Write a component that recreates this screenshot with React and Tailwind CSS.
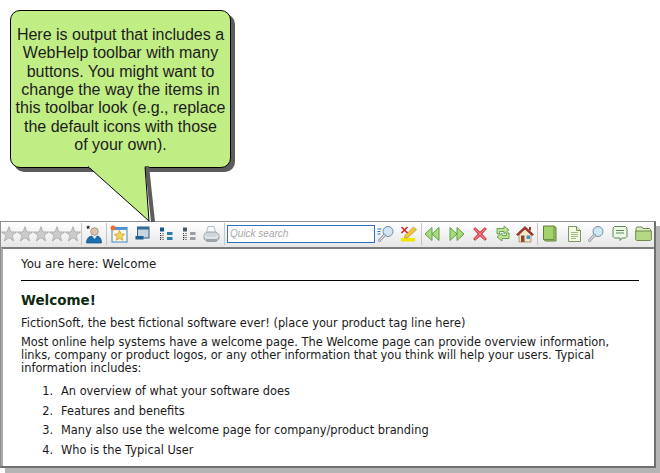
const Star = () => (
  <svg width="16" height="16" viewBox="0 0 16 16" className="shrink-0">
    <path d="M8 .5L9.900 5.900 15.600 6 11 9.500 12.700 15 8 11.700 3.300 15 5 9.500 .4 6 6.100 5.900z" fill="#cbcbcb" stroke="#a2a2a2" strokeWidth=".7" />
  </svg>
);

const Sep = ({ className }) => <div className={`w-px h-[22px] bg-[#c6c6c6] shrink-0 ${className}`} />;

const Person = () => (
  <svg width="17" height="20" viewBox="0 0 17 20" className="ml-[3px] shrink-0">
    <path d="M3 1l.6 1.500 1.500-.2-1 1.200.8 1.400-1.600-.6-1.200 1 .2-1.600-1.300-.9 1.600-.3z" fill="#111" />
    <circle cx="9.500" cy="7.500" r="3.800" fill="#dcc4b0" stroke="#94807a" strokeWidth=".7" />
    <path d="M1.500 19c0-4 2-6.500 5-7l3 2 3-2c2.500.5 4 3 4 7z" fill="#1f6fae" stroke="#0e4d82" strokeWidth=".7" />
    <path d="M7.500 12.500h4l-2 2.500z" fill="#e8eef2" />
  </svg>
);

const Favorites = () => (
  <svg width="18" height="18" viewBox="0 0 18 18" className="ml-[3px] shrink-0">
    <rect x="2" y="2.500" width="15" height="14.500" fill="#fbf7e8" stroke="#3f86c6" />
    <rect x="2" y="2.500" width="15" height="2.500" fill="#4a9bd8" />
    <path d="M9.500 5.500l1.600 3.400 3.600.4-2.700 2.400.8 3.600-3.300-1.900-3.300 1.900.8-3.600-2.700-2.400 3.600-.4z" fill="#f4d35a" stroke="#c9962a" strokeWidth=".7" />
    <circle cx="3" cy="3" r="2.500" fill="#ef6a2e" />
  </svg>
);

const Toc = () => (
  <svg width="15" height="15" viewBox="0 0 15 15" className="ml-[7px] shrink-0">
    <rect x="2.500" y="1" width="11.500" height="11" fill="#c8d4de" stroke="#2f5f86" />
    <rect x="2.500" y="1" width="11.500" height="2.500" fill="#2f6c9c" />
    <rect x=".5" y="10" width="8" height="3.500" fill="#1f5f92" />
  </svg>
);

const Tree = ({ a, b }) => (
  <svg width="14" height="14" viewBox="0 0 14 14" className="shrink-0">
    <rect x="1" y="0.500" width="4" height="4" fill={a} />
    <rect x="8" y="5" width="5.500" height="3" fill={b} />
    <rect x="8" y="10" width="5.500" height="3" fill={b} />
    <path d="M1.500 6v8M4 6v8M1.500 8.500h2M1.500 11h2" stroke="#333" strokeWidth="1" strokeDasharray="1 1" />
  </svg>
);

const Printer = () => (
  <svg width="17" height="18" viewBox="0 0 17 18" className="shrink-0">
    <path d="M5 1.500h6l1.500 6h-9z" fill="#f6f8f9" stroke="#a4b0b8" strokeWidth=".8" />
    <path d="M1 9.500l3-2.500h9l3 2.500v4.500l-3 2.500H4l-3-2.500z" fill="#ced6dc" stroke="#8a949c" strokeWidth=".8" />
    <path d="M1.500 10.500L5 13h7l3.500-2.500" fill="none" stroke="#f4f6f8" strokeWidth="1" />
    <path d="M3 15h11" stroke="#7a848b" strokeWidth="1.200" />
  </svg>
);

const Lens = ({ lines, className }) => (
  <svg width="18" height="18" viewBox="0 0 18 18" className={`shrink-0 ${className}`}>
    {lines && <path d="M.5 4h4M.5 6.500h3M.5 9h3" stroke="#2f78a8" strokeWidth="1" />}
    <circle cx="11" cy="6.500" r="5" fill="#cfe6f5" stroke="#6f8ea5" strokeWidth="1" />
    <path d="M7.500 10L2.500 15.500" stroke="#8b959c" strokeWidth="2.800" strokeLinecap="round" />
    <path d="M7.500 10L2.500 15.500" stroke="#f2f4f5" strokeWidth="1.100" strokeLinecap="round" />
  </svg>
);

const Highlight = () => (
  <svg width="18" height="18" viewBox="0 0 18 18" className="ml-[5px] shrink-0">
    <rect x="1" y="13" width="14" height="3.500" fill="#f2e500" />
    <path d="M5 10.500L13.500 2l3 2.500L8 12.500l-3.500.5z" fill="#f0c83c" stroke="#b7932a" strokeWidth=".7" />
    <path d="M1.500 2l6 6M7.500 2l-6 6" stroke="#d8222c" strokeWidth="1.600" />
  </svg>
);

const Arrows = ({ flip, className }) => (
  <svg width="16" height="16" viewBox="0 0 16 16" className={`shrink-0 ${className}`} style={flip ? { transform: "scaleX(-1)" } : undefined}>
    <path d="M8 1.500L1 8l7 6.500zM15 1.500L8 8l7 6.500z" fill="#a9dc78" stroke="#5d9c50" strokeWidth="1" strokeLinejoin="round" />
  </svg>
);

const Cross = () => (
  <svg width="16" height="16" viewBox="0 0 16 16" className="ml-[7px] shrink-0">
    <path d="M1.500 3L3 1.500 8 6l5-4.500L14.500 3 10 8l4.500 5-1.500 1.500L8 10l-5 4.500L1.500 13 6 8z" fill="#ea4a55" stroke="#b82a35" strokeWidth=".6" />
    <path d="M3 3l10 10M13 3L3 13" stroke="#f49aa0" strokeWidth=".8" />
  </svg>
);

const Sync = () => (
  <svg width="16" height="17" viewBox="0 0 16 17" className="ml-[7px] shrink-0">
    <path d="M2 9V3.500h7V1l5 4-5 4V6.500H4.500V9z" fill="#c2e48e" stroke="#5d9c50" strokeWidth=".9" strokeLinejoin="round" />
    <path d="M14 8v5.500H7V16l-5-4 5-4v2.500h4.500V8z" fill="#c2e48e" stroke="#5d9c50" strokeWidth=".9" strokeLinejoin="round" />
  </svg>
);

const Home = () => (
  <svg width="18" height="18" viewBox="0 0 18 18" className="ml-[5px] shrink-0">
    <path d="M3 8.500v8.500h12V8.500L9 3z" fill="#f4e6c8" stroke="#8c7a5e" strokeWidth=".7" />
    <path d="M.5 9.500L9 1.500l8.500 8-1.500 1L9 4 2 10.500z" fill="#a8392c" stroke="#6f2018" strokeWidth=".7" />
    <rect x="5" y="10.500" width="3.500" height="6.500" fill="#8a4a2a" />
    <rect x="10.500" y="10.500" width="3.500" height="3.500" fill="#4a8fc4" />
    <rect x="13" y="2" width="2" height="3.500" fill="#a8392c" />
  </svg>
);

const Book = () => (
  <svg width="15" height="17" viewBox="0 0 15 17" className="ml-[4px] shrink-0">
    <path d="M1.500 1h10.500l2 1.500V16H3.500l-2-1.500z" fill="#a2d268" stroke="#5f7a40" strokeWidth="1" />
    <path d="M12 1v13.500H1.500" fill="none" stroke="#6c9042" strokeWidth="1" />
  </svg>
);

const Doc = () => (
  <svg width="13" height="16" viewBox="0 0 13 16" className="ml-[11px] shrink-0">
    <path d="M.5.5h8l4 4v11H.5z" fill="#f4f9e6" stroke="#7d9560" strokeWidth="1" />
    <path d="M8.500.5v4h4" fill="#dfe8c8" stroke="#7d9560" strokeWidth="1" />
    <path d="M3 6.500h7M3 8.500h7M3 10.500h7M3 12.500h5" stroke="#a4bb80" strokeWidth="1" />
  </svg>
);

const Comment = () => (
  <svg width="16" height="17" viewBox="0 0 16 17" className="ml-[7px] shrink-0">
    <path d="M2.500 1.500h11l1.500 1.500v8.500l-1.500 1.500H10l-2 2.500V13H2.500L1 11.500V3z" fill="#eef6e6" stroke="#5f8a60" strokeWidth="1" strokeLinejoin="round" />
    <path d="M4 5.500h8M4 8h8" stroke="#5f8a60" strokeWidth="1" />
  </svg>
);

const Folder = () => (
  <svg width="17" height="15" viewBox="0 0 17 15" className="ml-[7px] shrink-0">
    <path d="M1 2.500L2 1h5l1 1.500h6.500l1 1V6H1z" fill="#dcebc0" stroke="#6c8a4c" strokeWidth="1" />
    <path d="M.7 5h15.600v8.500l-1 1H1.700l-1-1z" fill="#b4d884" stroke="#6c8a4c" strokeWidth="1" />
  </svg>
);

const steps = [
  "An overview of what your software does",
  "Features and benefits",
  "Many also use the welcome page for company/product branding",
  "Who is the Typical User",
];

export default function App() {
  return (
    <div className="relative w-[660px] h-[473px] overflow-hidden bg-white pt-[10px] font-['Verdana','DejaVu_Sans',sans-serif]">
      <div className="relative z-10 ml-[10px] w-[221px] h-[158px] rounded-[10px] border border-black bg-[#c1ed85] pt-[15px] shadow-[4px_4px_0_#5c5c5c] text-center font-['Liberation_Sans',sans-serif] text-[16px] leading-[18.35px] text-[#1c1c1c]">
        Here is output that includes a<br />
        WebHelp toolbar with many<br />
        buttons. You might want to<br />
        change the way the items in<br />
        this toolbar look (e.g., replace<br />
        the default icons with those<br />
        of your own).
        <svg width="70" height="60" viewBox="0 0 70 60" className="absolute left-[76px] top-[155px]">
          <path d="M60 0L66 56" stroke="#5c5c5c" strokeWidth="4" fill="none" />
          <path d="M1 0L62 55L58 0z" fill="#c1ed85" />
          <path d="M1 0.500L62 55L58 0.500" fill="none" stroke="#000" strokeWidth="1" />
          <path d="M2 0.500H57.500" stroke="#c1ed85" strokeWidth="2" />
        </svg>
      </div>

      <div className="mt-[53px] w-[660px] h-[252px] pr-[4px] pb-[5px] relative">
        <div className="h-full w-full border border-[#8f8f8f] border-b-[#707070] border-r-[#707070] border-b-2 border-r-2 shadow-[5px_5px_0_#b4b4b4] flex flex-col bg-white">
          <div className="h-[25px] shrink-0 flex items-center pb-[2px] bg-gradient-to-b from-[#ffffff] to-[#e6e6e6]">
            <div className="flex shrink-0 w-[80px]">
              <Star /><Star /><Star /><Star /><Star />
            </div>
            <Sep className="ml-[0px]" />
            <Person />
            <Sep className="ml-[4px]" />
            <Favorites />
            <Toc />
            <div className="ml-[9px]"><Tree a="#15598c" b="#2a7bb0" /></div>
            <div className="ml-[9px]"><Tree a="#4a5a66" b="#9aa0a4" /></div>
            <div className="ml-[7px]"><Printer /></div>
            <Sep className="ml-[4px]" />
            <div className="ml-[2px] w-[148px] h-[18px] shrink-0 border border-[#2f6fc0] bg-white px-[2px] flex items-center font-['Liberation_Sans',sans-serif] italic text-[10px] text-[#a8a8a8]">Quick search</div>
            <Lens lines className="ml-[2px]" />
            <Highlight />
            <Sep className="ml-[3px]" />
            <Arrows className="ml-[2px]" />
            <Arrows flip className="ml-[9px]" />
            <Cross />
            <Sync />
            <Home />
            <Sep className="ml-[3px]" />
            <Book />
            <Doc />
            <Lens className="ml-[6px]" />
            <Comment />
            <Folder />
          </div>
          <div className="flex-1 border-t-2 border-t-[#7d7d7d] border-l-2 border-l-[#a8a8a8] pl-[18px] pr-[15px] pt-[9px] text-[11.4px] leading-[13px] text-[#1a1a1a]">
            <p className="text-[11.8px]">You are here: Welcome</p>
            <hr className="mt-[9px] border-t border-black" />
            <h1 className="mt-[11px] text-[13.5px] leading-[17px] font-bold text-[#0f2a0f]">Welcome!</h1>
            <p className="mt-[8px]">FictionSoft, the best fictional software ever! (place your product tag line here)</p>
            <p className="mt-[6px] pr-[19px]">Most online help systems have a welcome page. The Welcome page can provide overview information, links, company or product logos, or any other information that you think will help your users. Typical information includes:</p>
            <ol className="mt-[10px] flex flex-col gap-[6.500px]">
              {steps.map((s, i) => (
                <li key={s} className="flex">
                  <span className="w-[40px] shrink-0 pr-[8px] text-right">{i + 1}.</span>
                  <span>{s}</span>
                </li>
              ))}
            </ol>
          </div>
        </div>
      </div>
    </div>
  );
}
